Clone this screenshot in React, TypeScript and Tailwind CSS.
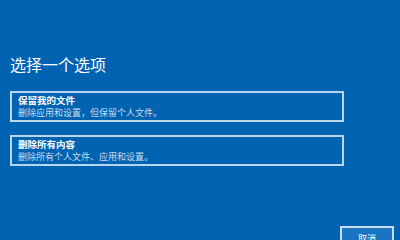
const font = { fontFamily: '"Noto Sans CJK SC", "Noto Sans", sans-serif' };

const options = [
  { title: '保留我的文件', desc: '删除应用和设置，但保留个人文件。' },
  { title: '删除所有内容', desc: '删除所有个人文件、应用和设置。' },
];

export default function App() {
  return (
    <div
      style={font}
      className="w-[400px] h-[240px] bg-[#0063b1] overflow-hidden flex flex-col pl-[10px] pr-[6px] pt-[54px]"
    >
      <h1 className="text-[16px] leading-[20px] text-white font-normal">选择一个选项</h1>

      <div className="mt-[17px] flex flex-col gap-[13px] w-[334px]">
        {options.map((o) => (
          <div
            key={o.title}
            className="h-[31px] border-2 border-[#b9d6ef] pl-[6px] pt-[1px] flex flex-col"
          >
            <span className="text-[9.5px] leading-[12px] font-bold text-white">{o.title}</span>
            <span className="text-[9px] leading-[11px] mt-[1px] text-[#c9ddf0]">{o.desc}</span>
          </div>
        ))}
      </div>

      <div className="mt-[60px] flex justify-end">
        <button className="w-[54px] h-[24px] border-2 border-[#c9dcee] bg-[#1a74c2] text-white text-[9px] leading-[18px] pt-[1px]">
          取消
        </button>
      </div>
    </div>
  );
}
